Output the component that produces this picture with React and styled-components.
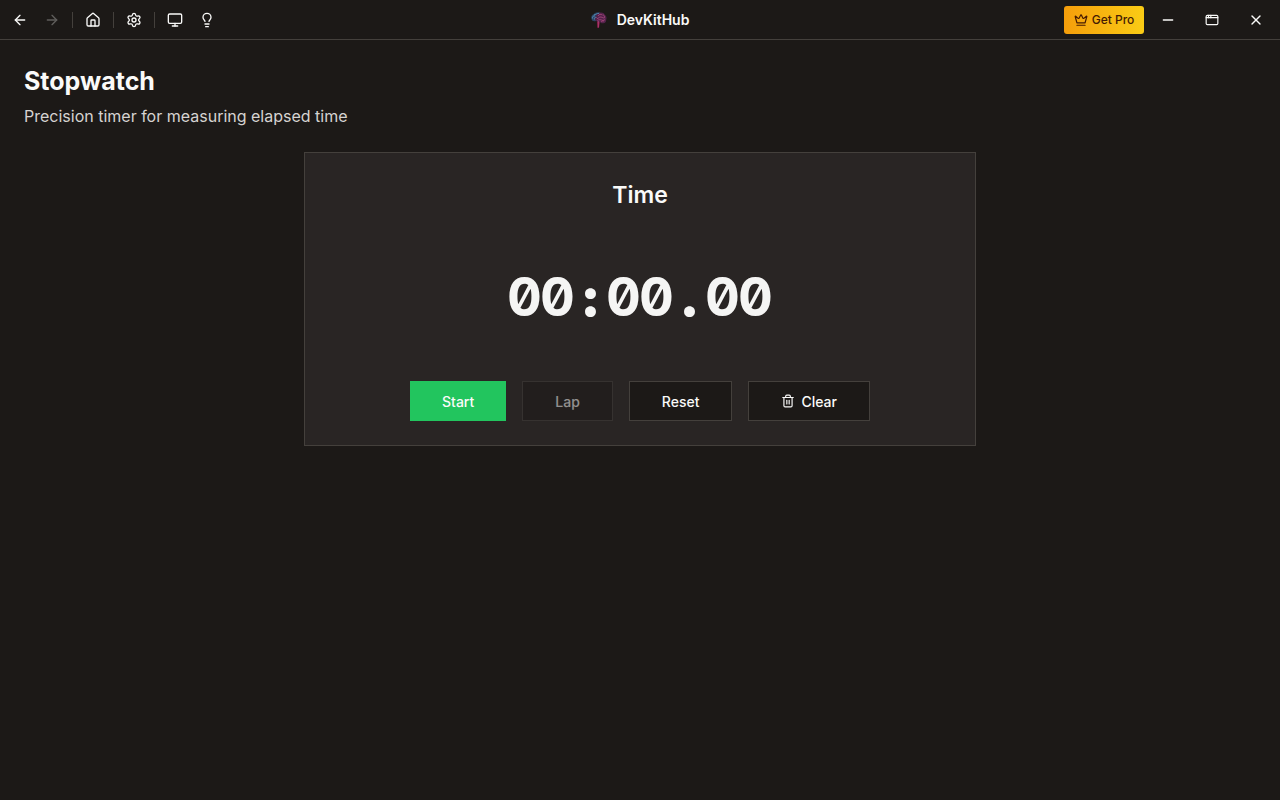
import React, { useEffect, useRef, useState } from "react";
import styled, { createGlobalStyle } from "styled-components";
import {
  AppWindow,
  ArrowLeft,
  ArrowRight,
  Crown,
  House,
  Lightbulb,
  Minus,
  Monitor,
  Settings,
  Trash2,
  X,
} from "lucide-react";

const MainBg = "#1c1917";
const CardBg = "#292524";
const BorderColor = "#44403c";
const TextColor = "#fafaf9";
const MutedColor = "#d6d3d1";

const GlobalStyle = createGlobalStyle`
  * {
    box-sizing: border-box;
  }
  body {
    margin: 0;
    background: ${MainBg};
    color: ${TextColor};
    font-family: Inter, "Liberation Sans", sans-serif;
  }
  button {
    font-family: inherit;
  }
`;

const TitleBar = styled.header`
  display: grid;
  grid-template-columns: 1fr auto 1fr;
  align-items: center;
  height: 40px;
  padding: 0 4px;
  border-bottom: 1px solid ${BorderColor};
`;

const BarGroup = styled.div`
  display: flex;
  align-items: center;
  justify-content: ${(props) => (props.$end ? "flex-end" : "flex-start")};
  gap: ${(props) => (props.$end ? "4px" : "0")};
`;

const IconButton = styled.button`
  display: flex;
  align-items: center;
  justify-content: center;
  width: ${(props) => (props.$wide ? "40px" : "32px")};
  height: 32px;
  padding: 0;
  border: none;
  background: transparent;
  color: ${TextColor};
  &:disabled {
    opacity: 0.3;
  }
`;

const Separator = styled.span`
  width: 1px;
  height: 16px;
  margin: 0 4px;
  background: ${BorderColor};
`;

const Brand = styled.div`
  display: flex;
  align-items: center;
  gap: 10px;
  font-size: 14px;
  line-height: 20px;
  font-weight: 600;
`;

const ProButton = styled.button`
  display: flex;
  align-items: center;
  justify-content: center;
  gap: 4px;
  width: 80px;
  height: 28px;
  padding: 0;
  border: none;
  border-radius: 3px;
  background: linear-gradient(to right, #f59e0b, #facc15);
  color: #451a03;
  font-size: 12px;
  font-weight: 500;
  white-space: nowrap;
`;

const Page = styled.main`
  padding: 24px;
`;

const Title = styled.h1`
  margin: 0;
  font-size: 25px;
  line-height: 34px;
  font-weight: 700;
`;

const Subtitle = styled.p`
  margin: 6px 0 0;
  color: ${MutedColor};
  font-size: 16px;
  line-height: 24px;
`;

const Card = styled.section`
  max-width: 672px;
  margin: 24px auto 0;
  padding: 24px;
  border: 1px solid ${BorderColor};
  background: ${CardBg};
`;

const CardTitle = styled.h2`
  margin: 0;
  font-size: 23px;
  line-height: 36px;
  font-weight: 600;
  text-align: center;
`;

const Clock = styled.div`
  display: flex;
  justify-content: center;
  margin: 54px 0;
  color: #f5f5f4;
  font-size: 54px;
  line-height: 60px;
  font-weight: 700;
  font-feature-settings: "zero", "tnum";
`;

// every character gets the same cell so the digits don't jump
const ClockChar = styled.span`
  display: flex;
  justify-content: center;
  width: 33px;
  font-weight: ${(props) => (props.$mark ? 900 : 700)};
`;

const Actions = styled.div`
  display: flex;
  justify-content: center;
  gap: 16px;
`;

const ActionButton = styled.button`
  display: flex;
  align-items: center;
  justify-content: center;
  gap: 6px;
  height: 40px;
  padding: 0 32px;
  border: 1px solid ${BorderColor};
  background: ${MainBg};
  color: ${TextColor};
  font-size: 14px;
  font-weight: 500;
  &:disabled {
    opacity: 0.5;
  }
`;

const StartButton = styled(ActionButton)`
  border: none;
  background: #22c55e;
`;

const Logo = () => (
  <svg width="16" height="16" viewBox="0 0 16 16" fill="none" aria-hidden="true">
    <path d="M6 8.500C6 11 6.500 13 6.300 15.700H8L9 9Z" fill="#8c1746" />
    <path
      d="M.5 7C-.2 5 .8 3 2.500 2.300 4 .5 6.500-.2 9 .5V5L5 9C2.500 9.500 1 9 .5 7Z"
      fill="#2c4564"
    />
    <path
      d="M4 5.500C5 3 7 .8 9.500.6c2-.2 3.500.7 4.200 2.200 1.800 1 2.300 3.200 1.500 5C15.300 10 13.800 11.500 12 11.200c-1.200.3-2.400-.2-3-1.200-1.500.2-3.200-.2-4-1.300C3.800 8 3.500 7 4 5.500Z"
      fill="#53234b"
    />
    <path
      d="M1.500 6.500C1 4.500 2.500 3.500 4 4M3 2.800C5 3 5.500 1 8 1.500M3.500 7.500C3 6 4 5 5.500 5.500"
      stroke="#5b93bf"
      strokeWidth=".8"
    />
    <path
      d="M7 4c1-2 3-2 4.500-1M6 6.500c1.500.5 2-2 4-1.500s2 1.500 4 .5M6.500 8.500c1-1 3-1 4-.5s2.500.5 3.500-.5M10.500 10c0-1 1-1.500 2.500-1M12 3c1 0 1.500 1 1.500 2M7.300 9v6.500"
      stroke="#b04a80"
      strokeWidth=".8"
    />
  </svg>
);

const pad = (n) => String(n).padStart(2, "0");

const formatTime = (ms) =>
  `${pad(Math.floor(ms / 60000))}:${pad(Math.floor(ms / 1000) % 60)}.${pad(
    Math.floor(ms / 10) % 100
  )}`;

const App = () => {
  const [running, setRunning] = useState(false);
  const [elapsed, setElapsed] = useState(0);
  const [laps, setLaps] = useState([]);
  const offset = useRef(0);

  useEffect(() => {
    if (!running) return;
    const startedAt = Date.now() - offset.current;
    const timer = setInterval(() => {
      offset.current = Date.now() - startedAt;
      setElapsed(offset.current);
    }, 10);
    return () => clearInterval(timer);
  }, [running]);

  const reset = () => {
    setRunning(false);
    setElapsed(0);
    offset.current = 0;
  };

  return (
    <>
      <GlobalStyle />
      <TitleBar>
        <BarGroup>
          <IconButton aria-label="Back">
            <ArrowLeft size={16} />
          </IconButton>
          <IconButton aria-label="Forward" disabled>
            <ArrowRight size={16} />
          </IconButton>
          <Separator />
          <IconButton aria-label="Home">
            <House size={16} />
          </IconButton>
          <Separator />
          <IconButton aria-label="Settings">
            <Settings size={16} />
          </IconButton>
          <Separator />
          <IconButton aria-label="Display">
            <Monitor size={16} />
          </IconButton>
          <IconButton aria-label="Tips">
            <Lightbulb size={16} />
          </IconButton>
        </BarGroup>
        <Brand>
          <Logo />
          <span>DevKitHub</span>
        </Brand>
        <BarGroup $end>
          <ProButton>
            <Crown size={14} />
            Get Pro
          </ProButton>
          <IconButton $wide aria-label="Minimize">
            <Minus size={16} />
          </IconButton>
          <IconButton $wide aria-label="Maximize">
            <AppWindow size={14} />
          </IconButton>
          <IconButton $wide aria-label="Close">
            <X size={16} />
          </IconButton>
        </BarGroup>
      </TitleBar>
      <Page>
        <Title>Stopwatch</Title>
        <Subtitle>Precision timer for measuring elapsed time</Subtitle>
        <Card>
          <CardTitle>Time</CardTitle>
          <Clock role="timer">
            {formatTime(elapsed)
              .split("")
              .map((char, i) => (
                <ClockChar key={i} $mark={char === ":" || char === "."}>
                  {char}
                </ClockChar>
              ))}
          </Clock>
          <Actions>
            <StartButton onClick={() => setRunning(!running)}>
              {running ? "Stop" : "Start"}
            </StartButton>
            <ActionButton
              disabled={!running}
              onClick={() => setLaps([...laps, elapsed])}
            >
              Lap
            </ActionButton>
            <ActionButton onClick={reset}>Reset</ActionButton>
            <ActionButton onClick={() => setLaps([])}>
              <Trash2 size={14} />
              Clear
            </ActionButton>
          </Actions>
          {laps.map((lap, i) => (
            <Subtitle key={i}>{formatTime(lap)}</Subtitle>
          ))}
        </Card>
      </Page>
    </>
  );
};

export default App;
